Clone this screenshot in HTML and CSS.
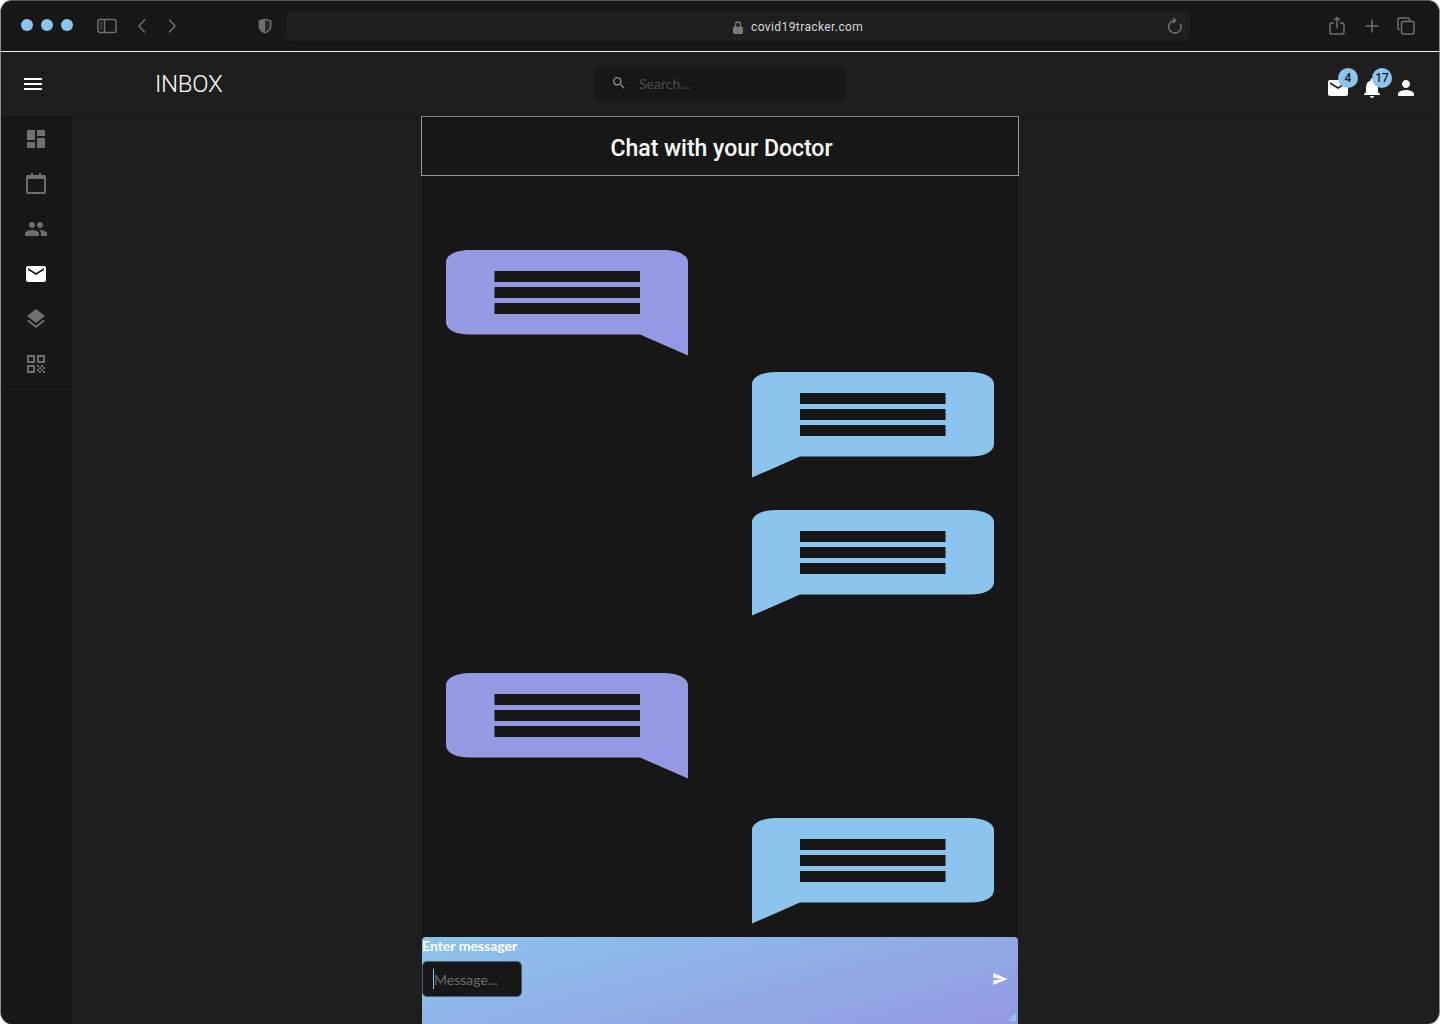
FILE: index.html
```html
<!DOCTYPE html>
<html>
<head>
  <title>Inbox</title>
  <link rel="stylesheet" href="styles.css">
</head>
<body>
  <svg class="defs" width="0" height="0">
    <symbol id="bubble" viewBox="0 0 242 106">
      <path d="M24 0H218C232 0 242 5 242 12V105.500L194 84.500H24C10 84.500 0 80 0 72V12C0 5 10 0 24 0Z"/>
      <rect class="bubble-line" x="48.500" y="21" width="145.500" height="11"/>
      <rect class="bubble-line" x="48.500" y="37" width="145.500" height="11"/>
      <rect class="bubble-line" x="48.500" y="53" width="145.500" height="11"/>
    </symbol>
  </svg>

  <div class="window">
    <header class="toolbar">
      <div class="dots"><span></span><span></span><span></span></div>
      <svg class="tool-icon sidebar-toggle" width="20" height="16" viewBox="0 0 20 16"><rect x="1" y="1.500" width="18" height="13" rx="2"/><path d="M7.500 1.500v13"/><path d="M3.500 5h1.500M3.500 7.500h1.500M3.500 10h1.500"/></svg>
      <svg class="tool-icon nav-back" width="10" height="16" viewBox="0 0 10 16"><path d="M8 1.500L2 8l6 6.500"/></svg>
      <svg class="tool-icon nav-forward" width="10" height="16" viewBox="0 0 10 16"><path d="M2 1.500L8 8l-6 6.500"/></svg>
      <svg class="shield" width="14" height="16" viewBox="0 0 14 16"><path d="M7 .500L13.500 2.500V8c0 3.500-2.500 6-6.500 7.500C3 14 .500 11.500 .500 8V2.500Z" fill="#6f6f6f"/><path d="M7 2L2 3.500V8c0 2.700 1.800 4.700 5 6Z" fill="#6f6f6f"/><path d="M7 2l5 1.500V8c0 2.700-1.800 4.700-5 6Z" fill="#2a2a2a"/></svg>
      <div class="url-bar">
        <span class="url-text">
          <svg width="10" height="13" viewBox="0 0 10 13"><path d="M2.500 6V3.500a2.500 2.500 0 0 1 5 0V6" fill="none" stroke="#7b7b7b" stroke-width="1.300"/><rect y="5.500" width="10" height="7.500" rx="1.500" fill="#7b7b7b"/></svg>
          covid19tracker.com
        </span>
        <svg class="tool-icon reload" width="16" height="18" viewBox="0 0 16 18"><path d="M13.400 6.700A6.300 6.300 0 1 1 8 3.500"/><path d="M6 .800L8.700 3.500 6 6.200"/></svg>
      </div>
      <div class="tool-actions">
        <svg class="tool-icon" width="16" height="20" viewBox="0 0 16 20"><path d="M5 7H2.500A1.500 1.500 0 0 0 1 8.500v8A1.500 1.500 0 0 0 2.500 18h11a1.500 1.500 0 0 0 1.500-1.500v-8A1.500 1.500 0 0 0 13.500 7H11"/><path d="M8 12.500V1.500M5 4.200L8 1.500l3 2.700"/></svg>
        <svg class="tool-icon plus" width="14" height="14" viewBox="0 0 14 14"><path d="M7 .500v13M.500 7h13"/></svg>
        <svg class="tool-icon" width="18" height="18" viewBox="0 0 18 18"><path d="M3 12.500H2.500A1.500 1.500 0 0 1 1 11V2.500A1.500 1.500 0 0 1 2.500 1H11a1.500 1.500 0 0 1 1.500 1.500V4"/><rect x="4.500" y="4.500" width="12.500" height="12.500" rx="2"/></svg>
      </div>
    </header>

    <nav class="appbar">
      <div class="appbar-left">
        <svg class="menu-icon" width="18" height="12" viewBox="0 0 18 12"><path d="M0 0h18v2H0zM0 5h18v2H0zM0 10h18v2H0z" fill="#fff"/></svg>
        <h1 class="page-title">INBOX</h1>
      </div>
      <div class="search">
        <svg width="16" height="16" viewBox="0 0 24 24"><path d="M15.500 14h-.79l-.28-.27A6.470 6.470 0 0 0 16 9.500 6.500 6.500 0 1 0 9.500 16c1.610 0 3.090-.59 4.230-1.570l.27.28v.79l5 4.990L20.490 19l-4.990-5zm-6 0C7.010 14 5 11.990 5 9.500S7.010 5 9.500 5 14 7.010 14 9.500 11.990 14 9.500 14z" fill="#8a8a8a"/></svg>
        <span>Search...</span>
      </div>
      <div class="appbar-right">
        <div class="notify">
          <svg width="24" height="24" viewBox="0 0 24 24"><path d="M20 4H4c-1.100 0-1.990.900-1.990 2L2 18c0 1.100.900 2 2 2h16c1.100 0 2-.900 2-2V6c0-1.100-.900-2-2-2zm0 4l-8 5-8-5V6l8 5 8-5v2z" fill="#fff"/></svg>
          <span class="badge">4</span>
        </div>
        <div class="notify">
          <svg width="24" height="24" viewBox="0 0 24 24"><path d="M12 22c1.100 0 2-.900 2-2h-4c0 1.100.890 2 2 2zm6-6v-5c0-3.070-1.640-5.640-4.500-6.320V4c0-.830-.670-1.500-1.500-1.500s-1.500.670-1.500 1.500v.680C7.630 5.360 6 7.920 6 11v5l-2 2v1h16v-1l-2-2z" fill="#fff"/></svg>
          <span class="badge">17</span>
        </div>
        <div class="notify">
          <svg width="24" height="24" viewBox="0 0 24 24"><path d="M12 12c2.210 0 4-1.790 4-4s-1.790-4-4-4-4 1.790-4 4 1.790 4 4 4zm0 2c-2.670 0-8 1.340-8 4v2h16v-2c0-2.660-5.330-4-8-4z" fill="#fff"/></svg>
        </div>
      </div>
    </nav>

    <div class="content">
      <aside class="sidebar">
        <div class="side-list">
          <svg class="side-icon" viewBox="0 0 24 24"><path d="M3 13h8V3H3v10zm0 8h8v-6H3v6zm10 0h8V11h-8v10zm0-18v6h8V3h-8z"/></svg>
          <svg class="side-icon" viewBox="0 0 24 24"><path d="M7 1h2v2h6V1h2v2h3a2 2 0 0 1 2 2v15a2 2 0 0 1-2 2H4a2 2 0 0 1-2-2V5a2 2 0 0 1 2-2h3V1zM4 7v13h16V7H4z"/></svg>
          <svg class="side-icon" viewBox="0 0 24 24"><path d="M16 11c1.660 0 2.990-1.340 2.990-3S17.660 5 16 5c-1.660 0-3 1.340-3 3s1.340 3 3 3zm-8 0c1.660 0 2.990-1.340 2.990-3S9.660 5 8 5C6.340 5 5 6.340 5 8s1.340 3 3 3zm0 2c-2.330 0-7 1.170-7 3.500V19h14v-2.500c0-2.330-4.670-3.500-7-3.500zm8 0c-.290 0-.620.020-.970.050 1.160.840 1.970 1.970 1.970 3.450V19h6v-2.500c0-2.330-4.670-3.500-7-3.500z"/></svg>
          <svg class="side-icon active" viewBox="0 0 24 24"><path d="M20 4H4c-1.100 0-1.990.900-1.990 2L2 18c0 1.100.900 2 2 2h16c1.100 0 2-.900 2-2V6c0-1.100-.900-2-2-2zm0 4l-8 5-8-5V6l8 5 8-5v2z"/></svg>
          <svg class="side-icon" viewBox="0 0 24 24"><path d="M11.990 18.540l-7.370-5.730L3 14.070l9 7 9-7-1.630-1.270-7.380 5.740zM12 16l7.360-5.730L21 9l-9-7-9 7 1.630 1.270L12 16z"/></svg>
          <svg class="side-icon" viewBox="0 0 24 24"><path d="M3 11h8V3H3v8zm2-6h4v4H5V5zM3 21h8v-8H3v8zm2-6h4v4H5v-4zM13 3v8h8V3h-8zm6 6h-4V5h4v4zM19 19h2v2h-2zM13 13h2v2h-2zM15 15h2v2h-2zM13 17h2v2h-2zM15 19h2v2h-2zM17 17h2v2h-2zM17 13h2v2h-2zM19 15h2v2h-2z"/></svg>
        </div>
      </aside>

      <main class="main">
        <section class="chat">
          <h2 class="chat-title">Chat with your Doctor</h2>
          <div class="messages">
            <svg class="bubble doctor first"><use href="#bubble"/></svg>
            <svg class="bubble patient gap-17"><use href="#bubble"/></svg>
            <svg class="bubble patient gap-32"><use href="#bubble"/></svg>
            <svg class="bubble doctor gap-58"><use href="#bubble"/></svg>
            <svg class="bubble patient gap-40"><use href="#bubble"/></svg>
          </div>
          <form class="composer">
            <label class="composer-label">Enter messager</label>
            <div class="composer-row">
              <div class="composer-input"><i class="caret"></i>Message...</div>
              <svg class="send" width="16" height="16" viewBox="0 0 24 24"><path d="M2.010 21L23 12 2.010 3 2 10l15 2-15 2z" fill="#fff"/></svg>
            </div>
            <span class="resizer"></span>
          </form>
        </section>
      </main>
    </div>
  </div>
</body>
</html>
```

FILE: styles.css
```css
* {
  box-sizing: border-box;
}

html, body {
  margin: 0;
  height: 100%;
  overflow: hidden;
}

body {
  background: #fff;
  font-family: 'Lato', sans-serif;
}

.defs {
  display: block;
  height: 0;
}

.window {
  height: 1024px;
  display: flex;
  flex-direction: column;
  border-left: 1px solid #8a8a8a;
  border-right: 1px solid #8a8a8a;
  border-top: 1px solid #555;
  border-radius: 12px;
  overflow: hidden;
  background: #1e1e1e;
}

/* browser chrome */
.toolbar {
  height: 51px;
  flex: none;
  display: flex;
  align-items: center;
  padding: 0 24px 0 20px;
  background: #171717;
  border-bottom: 1px solid #fff;
}

.dots {
  display: flex;
  gap: 8px;
  margin-bottom: 3px;
}

.dots span {
  width: 12px;
  height: 12px;
  border-radius: 50%;
  background: #8bc4ec;
}

.tool-icon {
  fill: none;
  stroke: #6f6f6f;
  stroke-width: 1.500;
}

.sidebar-toggle {
  margin-left: 24px;
}

.nav-back {
  margin-left: 20px;
}

.nav-forward {
  margin-left: 20px;
}

.shield {
  margin-left: 81px;
}

.url-bar {
  width: 904px;
  height: 30px;
  margin-left: 14px;
  padding-right: 7px;
  display: flex;
  align-items: center;
  justify-content: flex-end;
  position: relative;
  background: #1e1e1e;
  border-radius: 6px;
}

.url-text {
  position: absolute;
  left: 447px;
  top: 9px;
  display: flex;
  align-items: center;
  gap: 8px;
  color: #d8d8d8;
  font-family: 'Roboto', sans-serif;
  font-size: 12px;
  letter-spacing: 0.4px;
}

.tool-actions {
  display: flex;
  align-items: center;
  gap: 19px;
  margin-left: auto;
}

.plus {
  margin: 0 -1px 0 1px;
}

/* app bar */
.appbar {
  height: 64px;
  flex: none;
  display: grid;
  grid-template-columns: 1fr 250px 1fr;
  align-items: center;
  padding: 0 23px;
  background: #1e1e1e;
  box-shadow: 0 1px 3px rgba(0, 0, 0, 0.25);
  position: relative;
  z-index: 1;
}

.appbar-left {
  display: flex;
  align-items: center;
  gap: 113px;
}

.page-title {
  margin: 0;
  color: #fff;
  font-family: 'Roboto', sans-serif;
  font-size: 24px;
  font-weight: 300;
  letter-spacing: -0.3px;
}

.search {
  height: 36px;
  display: flex;
  align-items: center;
  gap: 12px;
  padding: 0 0 2px 16px;
  background: #171717;
  border-radius: 4px;
  color: #4d4d4d;
  font-size: 14px;
}

.appbar-right {
  display: flex;
  justify-content: flex-end;
  gap: 10px;
  margin: 8px -2px 0 0;
}

.notify {
  width: 24px;
  height: 24px;
  position: relative;
}

.notify svg {
  display: block;
}

.badge {
  position: absolute;
  top: -8px;
  left: 12px;
  width: 20px;
  height: 20px;
  border-radius: 50%;
  display: flex;
  align-items: center;
  justify-content: center;
  background: #8bc4ec;
  color: #1a1a1a;
  font-family: 'Roboto', sans-serif;
  font-size: 12px;
  font-weight: 500;
}

/* page body */
.content {
  flex: 1;
  min-height: 0;
  display: flex;
}

.sidebar {
  width: 71px;
  flex: none;
  background: #171717;
}

.side-list {
  height: 269px;
  display: flex;
  flex-direction: column;
  align-items: center;
  gap: 21px;
  padding: 11px 1px 0 0;
  border-bottom: 1px solid #1c1c1c;
}

.side-icon {
  width: 24px;
  height: 24px;
  flex: none;
  fill: #6f6f6f;
}

.side-icon.active {
  fill: #fff;
}

.main {
  flex: 1;
  min-width: 0;
  display: flex;
  justify-content: center;
  padding-right: 71px;
}

.chat {
  width: 596px;
  display: flex;
  flex-direction: column;
  background: #171717;
}

.chat-title {
  width: 598px;
  height: 60px;
  flex: none;
  margin: 0 0 0 -1px;
  padding: 5px 0 0 3px;
  display: flex;
  align-items: center;
  justify-content: center;
  border: 1px solid #9a9a9a;
  color: #fff;
  font-family: 'Roboto', sans-serif;
  font-size: 23px;
  font-weight: 500;
}

.messages {
  flex: 1;
  min-height: 0;
  display: flex;
  flex-direction: column;
  padding: 0 24px;
}

.bubble {
  width: 242px;
  height: 106px;
  flex: none;
}

.bubble.doctor {
  fill: #9599e2;
  align-self: flex-start;
}

.bubble.patient {
  fill: #8bc4ec;
  align-self: flex-end;
  transform: scaleX(-1);
}

.bubble-line {
  fill: #171717;
}

.first { margin-top: 74px; }
.gap-17 { margin-top: 16px; }
.gap-32 { margin-top: 32px; }
.gap-58 { margin-top: 57px; }
.gap-40 { margin-top: 39px; }

.composer {
  height: 87px;
  flex: none;
  position: relative;
  border-radius: 4px 4px 0 0;
  background: linear-gradient(165deg, #8bc4ec 0%, #9599e2 100%);
}

.composer-label {
  display: block;
  color: #fff;
  font-size: 14px;
  font-weight: 700;
  line-height: 18px;
}

.composer-row {
  display: flex;
  align-items: center;
  justify-content: space-between;
  padding-right: 10px;
  margin-top: 6px;
}

.composer-input {
  width: 100px;
  height: 36px;
  display: flex;
  align-items: center;
  padding-left: 10px;
  background: #171717;
  border: 1px solid #4a5a78;
  border-radius: 5px;
  color: #6a6a6a;
  font-size: 14px;
}

.caret {
  width: 1px;
  height: 20px;
  background: #8bc4ec;
}

.resizer {
  position: absolute;
  right: 2px;
  bottom: 3px;
  width: 8px;
  height: 8px;
  background: linear-gradient(135deg, transparent 50%, #8bc4ec 50%);
}
```
